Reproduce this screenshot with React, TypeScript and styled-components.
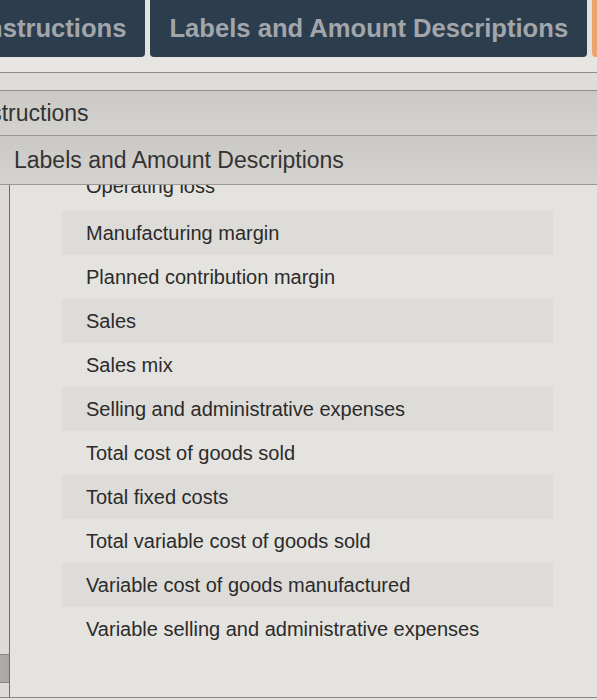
import React from 'react';
import styled, { createGlobalStyle } from 'styled-components';

const GlobalStyle = createGlobalStyle`
  html, body {
    margin: 0;
    padding: 0;
    background: #e3e1dd;
    overflow: hidden;
  }
  body {
    font-family: 'Liberation Sans', Arial, sans-serif;
  }
`;

const Viewport = styled.div`
  width: 597px;
  height: 700px;
  overflow: hidden;
  background: #e3e1dd;
`;

// the photo cuts the page on the left, so the frame starts a little off-screen
const Frame = styled.div`
  margin-left: -39px;
  width: 640px;
  display: flex;
  flex-direction: column;
`;

const TabBar = styled.div`
  display: flex;
  gap: 5px;
  height: 57px;
  background: #e4e2de;
`;

const Tab = styled.div<{ $accent?: boolean }>`
  height: 57px;
  padding: 0 19px;
  display: flex;
  align-items: center;
  box-sizing: border-box;
  background: ${p => (p.$accent ? '#eaa46c' : '#2c3d4e')};
  color: #a2a6ab;
  font-size: 25.6px;
  font-weight: bold;
  border-radius: 0 0 4px 4px;
  white-space: nowrap;
  flex-shrink: 0;
`;

const Strip = styled.div<{ $bg: string; $height: number }>`
  height: ${p => p.$height}px;
  background: ${p => p.$bg};
  border-bottom: 1px solid #8f8d89;
`;

const SectionHeader = styled.div<{ $indent: number; $height: number }>`
  height: ${p => p.$height}px;
  padding-left: ${p => p.$indent}px;
  display: flex;
  align-items: center;
  box-sizing: border-box;
  font-size: 23px;
  color: #333;
  background: linear-gradient(to bottom, #cbc9c5, #d4d2ce);
  border-bottom: 1px solid #9a9894;
  white-space: nowrap;
  position: relative;
  z-index: 1;
`;

const ListArea = styled.div`
  display: flex;
  height: 512px;
  border-bottom: 1px solid #8a8884;
`;

const Gutter = styled.div`
  width: 49px;
  flex-shrink: 0;
  display: flex;
  flex-direction: column;
  justify-content: flex-end;
  padding-bottom: 14px;
  background: #dddbd7;
  border-right: 1px solid #6f6d69;
  box-sizing: border-box;
`;

const GutterBlock = styled.div`
  height: 27px;
  background: linear-gradient(to right, #c4c2be, #a9a7a3);
  border-top: 1px solid #8a8884;
  border-bottom: 1px solid #8a8884;
`;

const ListScroll = styled.div`
  flex: 1;
  overflow: hidden;
  background: #e5e3df;
`;

// scrolled a little: the first entry sits half under the header
const List = styled.ul`
  list-style: none;
  margin: -23px 0 0 0;
  padding: 0 48px 0 52px;
`;

const Item = styled.li<{ $shade: boolean }>`
  height: 44px;
  display: flex;
  align-items: center;
  padding-left: 24px;
  font-size: 20px;
  color: #2b2b2b;
  background: ${p => (p.$shade ? '#dedcd8' : 'transparent')};
  white-space: nowrap;

  &:first-child {
    height: 49px;
  }
`;

const labels = [
  'Operating loss',
  'Manufacturing margin',
  'Planned contribution margin',
  'Sales',
  'Sales mix',
  'Selling and administrative expenses',
  'Total cost of goods sold',
  'Total fixed costs',
  'Total variable cost of goods sold',
  'Variable cost of goods manufactured',
  'Variable selling and administrative expenses',
];

export default function App() {
  return (
    <Viewport>
      <GlobalStyle />
      <Frame>
        <TabBar>
          <Tab>Instructions</Tab>
          <Tab>Labels and Amount Descriptions</Tab>
          <Tab $accent>&nbsp;</Tab>
        </TabBar>
        <Strip $bg="#e7e5e1" $height={15} />
        <Strip $bg="#dfddd9" $height={17} />
        <SectionHeader $indent={10} $height={45}>Instructions</SectionHeader>
        <SectionHeader $indent={53} $height={49}>Labels and Amount Descriptions</SectionHeader>
        <ListArea>
          <Gutter>
            <GutterBlock />
          </Gutter>
          <ListScroll>
            <List>
              {labels.map((label, i) => (
                <Item key={label} $shade={i % 2 === 1}>{label}</Item>
              ))}
            </List>
          </ListScroll>
        </ListArea>
      </Frame>
    </Viewport>
  );
}
